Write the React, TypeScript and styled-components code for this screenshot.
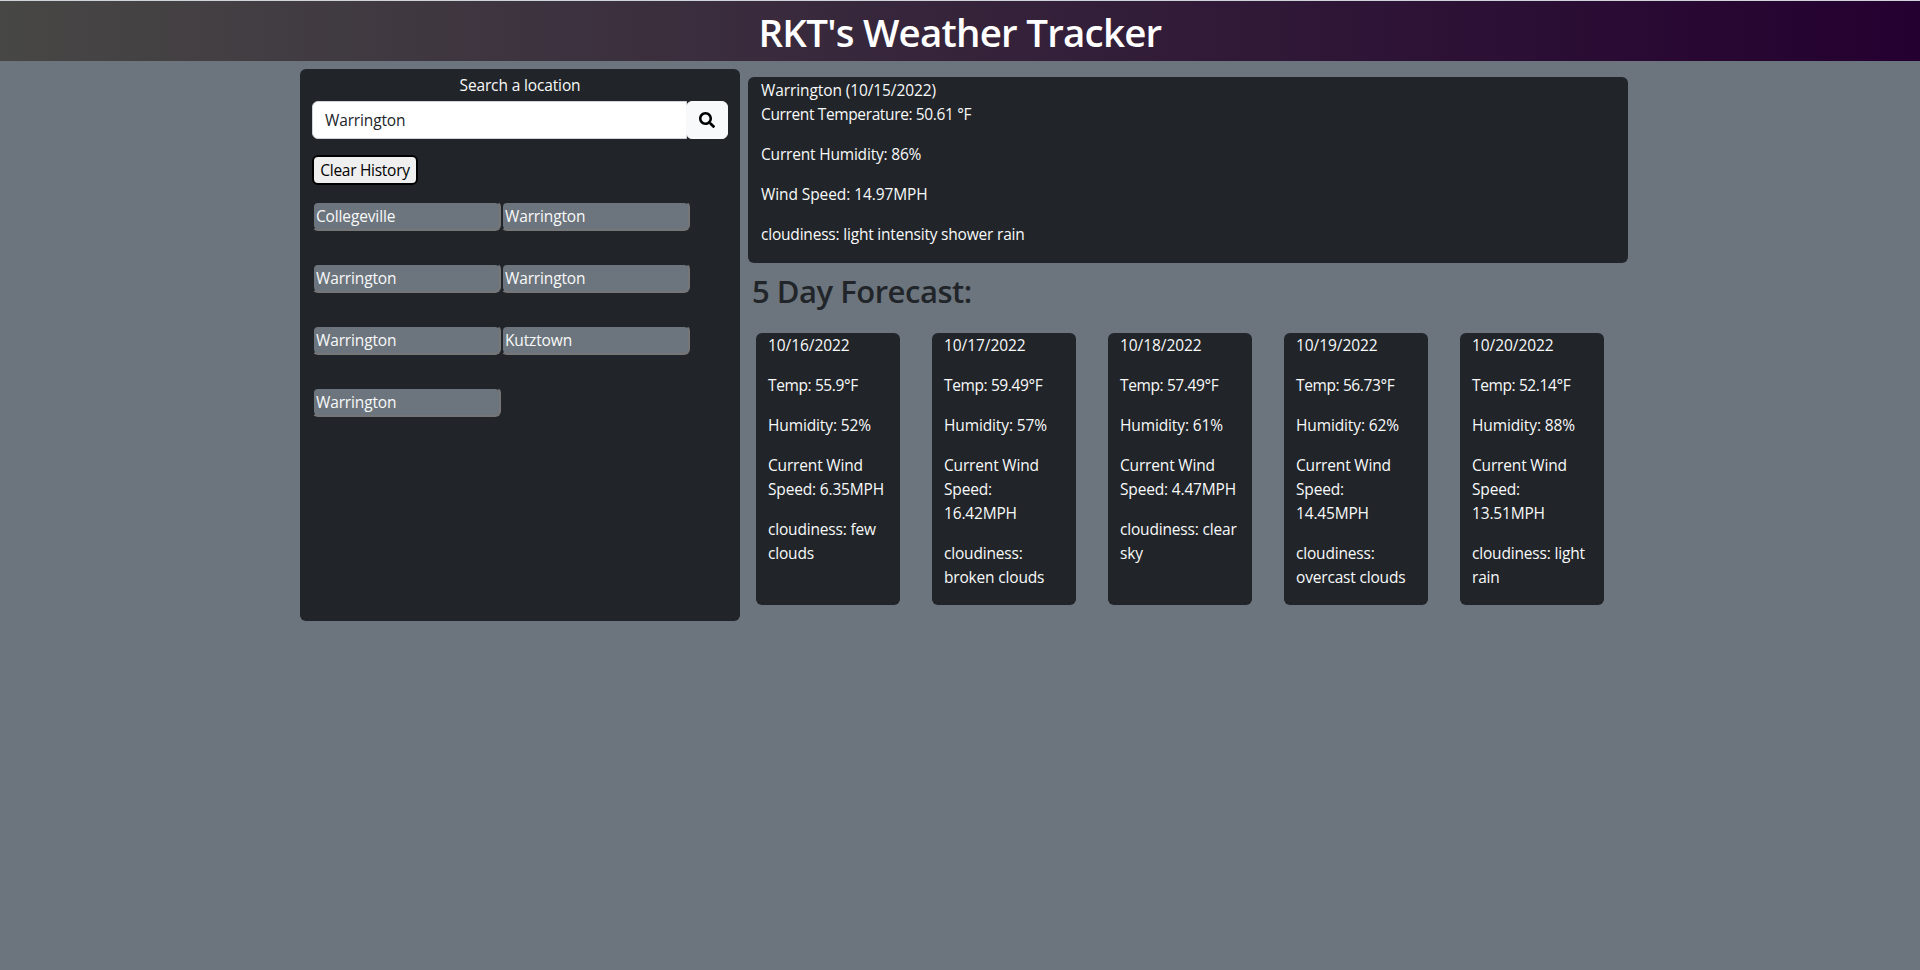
import React, { useState } from "react";
import styled, { createGlobalStyle } from "styled-components";

const GlobalStyle = createGlobalStyle`
  *, *::before, *::after { box-sizing: border-box; }
  body {
    margin: 0;
    min-height: 100vh;
    background: #6c757d;
    color: #212529;
    font-family: "Segoe UI", "Open Sans", "Noto Sans", sans-serif;
    font-size: 15.5px;
    line-height: 24px;
    letter-spacing: -0.14px;
  }
  p, h1, h2 { margin: 0; }
  button, input { font: inherit; letter-spacing: inherit; }
`;

const Header = styled.header`
  height: 61px;
  padding-top: 7px;
  border-top: 1px solid #ced4da;
  background: linear-gradient(to right, #474745, #240030) padding-box;
`;

const Title = styled.h1`
  color: #fff;
  text-align: center;
  font-size: 38.5px;
  font-weight: 600;
  line-height: 48px;
  letter-spacing: -0.77px;
`;

const Main = styled.main`
  display: grid;
  grid-template-columns: 440px 880px;
  column-gap: 8px;
  align-items: start;
  width: 1328px;
  margin: 8px 0 0 300px;
`;

const SearchPanel = styled.section`
  height: 552px;
  padding: 4px 12px 0;
  border-radius: 6px;
  background: #212529;
  color: #f8f9fa;
`;

const SearchLabel = styled.label`
  display: block;
  height: 28px;
  text-align: center;
`;

const SearchRow = styled.form`
  display: flex;
  height: 38px;
`;

const SearchInput = styled.input`
  flex: 1;
  min-width: 0;
  padding: 6px 12px;
  border: 1px solid #ced4da;
  border-radius: 6px 0 0 6px;
  outline: none;
  background: #fff;
  color: #212529;
`;

const SearchButton = styled.button`
  display: flex;
  align-items: center;
  justify-content: center;
  width: 42px;
  margin-left: -1px;
  padding: 0;
  border: 1px solid #f8f9fa;
  border-radius: 6px;
  background: #f8f9fa;
  color: #000;
`;

const ClearButton = styled.button`
  display: block;
  width: 106px;
  height: 30px;
  margin: 16px 0;
  padding: 0;
  border: 2px solid #000;
  border-radius: 6px;
  background: #efefef;
  color: #000;
  line-height: 26px;
  letter-spacing: -0.28px;
`;

const HistoryList = styled.div`
  display: grid;
  grid-template-columns: 189px 189px;
  row-gap: 32px;
`;

const HistoryItem = styled.input`
  width: 189px;
  height: 30px;
  padding: 1px 2px;
  border: 2px solid;
  border-color: #212529 #767676 #767676 #212529;
  border-radius: 6px;
  outline: none;
  background: #6c757d;
  color: #f8f9fa;
`;

const Results = styled.section`
  padding-top: 8px;
`;

const CurrentCard = styled.article`
  height: 186px;
  padding: 1px 13px;
  border-radius: 6px;
  background: #212529;
  color: #f8f9fa;
`;

const Reading = styled.p<{ $tracking?: number; $tight?: boolean }>`
  margin-bottom: ${(p) => (p.$tight ? 0 : 16)}px;
  letter-spacing: ${(p) => p.$tracking ?? -0.14}px;
`;

const ForecastTitle = styled.h2`
  margin: 8px 0 20px;
  padding: 0 4px 2px;
  font-size: 31px;
  font-weight: 600;
  line-height: 40px;
  letter-spacing: -0.48px;
`;

const Days = styled.div`
  display: grid;
  grid-template-columns: repeat(5, 144px);
  column-gap: 32px;
  padding-left: 8px;
`;

const DayCard = styled.article`
  height: 272px;
  padding: 0 12px;
  border-radius: 6px;
  background: #212529;
  color: #f8f9fa;
`;

const MagnifierIcon = () => (
  <svg width="16" height="16" viewBox="0 0 512 512" fill="currentColor" aria-hidden="true">
    <path d="M505 442.7L405.3 343c-4.5-4.5-10.6-7-17-7H372c27.6-35.3 44-79.7 44-128C416 93.1 322.9 0 208 0S0 93.1 0 208s93.1 208 208 208c48.3 0 92.7-16.4 128-44v16.3c0 6.4 2.5 12.5 7 17l99.7 99.7c9.4 9.4 24.6 9.4 33.9 0l28.3-28.3c9.4-9.4 9.4-24.6.1-34zM208 336c-70.7 0-128-57.2-128-128 0-70.7 57.2-128 128-128 70.7 0 128 57.2 128 128 0 70.7-57.2 128-128 128z" />
  </svg>
);

const cities = ["Collegeville", "Warrington", "Warrington", "Warrington", "Warrington", "Kutztown", "Warrington"];

const forecast = [
  { date: "10/16/2022", temp: "55.9", humidity: 52, wind: "6.35", sky: "few clouds" },
  { date: "10/17/2022", temp: "59.49", humidity: 57, wind: "16.42", sky: "broken clouds" },
  { date: "10/18/2022", temp: "57.49", humidity: 61, wind: "4.47", sky: "clear sky" },
  { date: "10/19/2022", temp: "56.73", humidity: 62, wind: "14.45", sky: "overcast clouds" },
  { date: "10/20/2022", temp: "52.14", humidity: 88, wind: "13.51", sky: "light rain" },
];

export default function App() {
  const [query, setQuery] = useState("Warrington");
  const [history, setHistory] = useState(cities);

  return (
    <>
      <GlobalStyle />
      <Header>
        <Title>RKT's Weather Tracker</Title>
      </Header>
      <Main>
        <SearchPanel>
          <SearchLabel htmlFor="city">Search a location</SearchLabel>
          <SearchRow onSubmit={(e) => e.preventDefault()}>
            <SearchInput id="city" value={query} onChange={(e) => setQuery(e.target.value)} />
            <SearchButton aria-label="Search">
              <MagnifierIcon />
            </SearchButton>
          </SearchRow>
          <ClearButton onClick={() => setHistory([])}>Clear History</ClearButton>
          <HistoryList>
            {history.map((city, i) => (
              <HistoryItem key={i} value={city} readOnly onClick={() => setQuery(city)} />
            ))}
          </HistoryList>
        </SearchPanel>
        <Results>
          <CurrentCard>
            <Reading $tight $tracking={-0.1}>Warrington (10/15/2022)</Reading>
            <Reading $tracking={-0.37}>Current Temperature: 50.61 °F</Reading>
            <Reading $tracking={-0.19}>Current Humidity: 86%</Reading>
            <Reading $tracking={-0.09}>Wind Speed: 14.97MPH</Reading>
            <Reading $tracking={-0.2}>cloudiness: light intensity shower rain</Reading>
          </CurrentCard>
          <ForecastTitle>5 Day Forecast:</ForecastTitle>
          <Days>
            {forecast.map((day) => (
              <DayCard key={day.date}>
                <Reading $tracking={-0.06}>{day.date}</Reading>
                <Reading $tracking={-0.38}>{`Temp: ${day.temp}°F`}</Reading>
                <Reading $tracking={-0.12}>{`Humidity: ${day.humidity}%`}</Reading>
                <Reading $tracking={-0.17}>{`Current Wind Speed: ${day.wind}MPH`}</Reading>
                <Reading $tracking={-0.18}>{`cloudiness: ${day.sky}`}</Reading>
              </DayCard>
            ))}
          </Days>
        </Results>
      </Main>
    </>
  );
}
